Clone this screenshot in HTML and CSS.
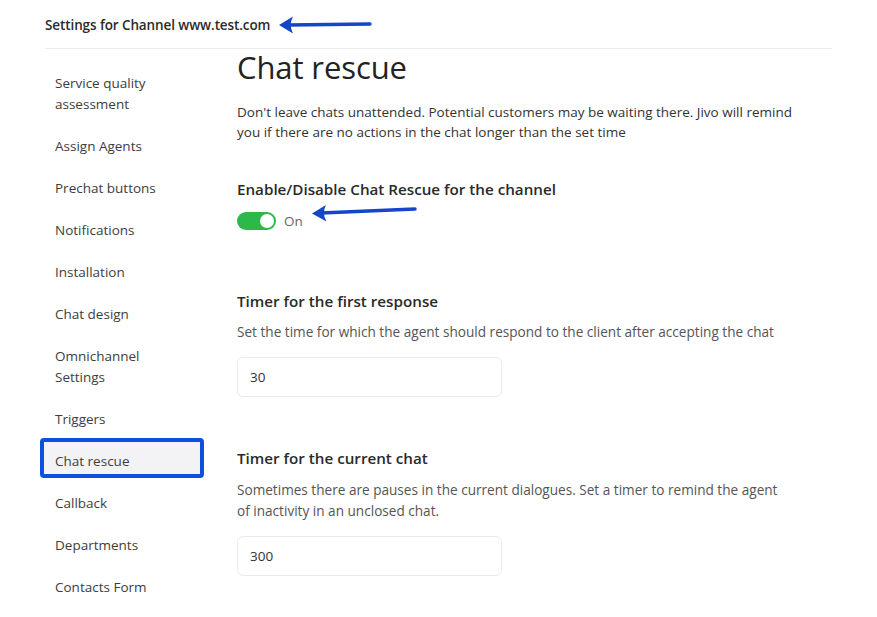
FILE: index.html
```html
<!DOCTYPE html>
<html lang="en">
<head>
<meta charset="utf-8">
<title>Chat rescue</title>
<link rel="stylesheet" href="styles.css">
</head>
<body>
<div class="frame">
  <header class="topbar">
    <span class="page-title">Settings for Channel www.test.com</span>
    <svg class="arrow arrow-top" width="96" height="20" viewBox="0 0 96 20" aria-hidden="true">
      <path d="M10 10 L92 9" stroke="#1546c9" stroke-width="3.5" stroke-linecap="round" fill="none"/>
      <path d="M1 10 L15 1.5 Q10.5 10 15 18.5 Z" fill="#1546c9"/>
    </svg>
  </header>
  <div class="layout">
    <nav class="sidebar">
      <a class="nav-item">Service quality assessment</a>
      <a class="nav-item">Assign Agents</a>
      <a class="nav-item">Prechat buttons</a>
      <a class="nav-item">Notifications</a>
      <a class="nav-item">Installation</a>
      <a class="nav-item">Chat design</a>
      <a class="nav-item">Omnichannel Settings</a>
      <a class="nav-item">Triggers</a>
      <a class="nav-item active">Chat rescue</a>
      <a class="nav-item">Callback</a>
      <a class="nav-item">Departments</a>
      <a class="nav-item">Contacts Form</a>
    </nav>
    <main class="content">
      <h1 class="title">Chat rescue</h1>
      <p class="intro">Don't leave chats unattended. Potential customers may be waiting there. Jivo will remind you if there are no actions in the chat longer than the set time</p>

      <section class="block block-toggle">
        <h2 class="label">Enable/Disable Chat Rescue for the channel</h2>
        <div class="toggle-row">
          <span class="switch"><span class="knob"></span></span>
          <span class="switch-text">On</span>
          <svg class="arrow arrow-toggle" width="108" height="20" viewBox="0 0 108 20" aria-hidden="true">
            <path d="M10 11 L104 7" stroke="#1546c9" stroke-width="3.5" stroke-linecap="round" fill="none"/>
            <path d="M1 11.5 L15 3 Q10.5 11.5 15.5 19.5 Z" fill="#1546c9"/>
          </svg>
        </div>
      </section>

      <section class="block block-first">
        <h2 class="label">Timer for the first response</h2>
        <p class="desc">Set the time for which the agent should respond to the client after accepting the chat</p>
        <div class="field">30</div>
      </section>

      <section class="block block-current">
        <h2 class="label">Timer for the current chat</h2>
        <p class="desc">Sometimes there are pauses in the current dialogues. Set a timer to remind the agent of inactivity in an unclosed chat.</p>
        <div class="field">300</div>
      </section>
    </main>
  </div>
</div>
</body>
</html>
```
FILE: styles.css
```css
* { box-sizing: border-box; }
html, body { margin: 0; padding: 0; background: #fff; }
body {
  font-family: "Open Sans", "Noto Sans", "Liberation Sans", sans-serif;
  color: #333;
  width: 877px;
  height: 617px;
  overflow: hidden;
}
.frame {
  margin-left: 45px;
  width: 787px;
}
.topbar {
  position: relative;
  height: 49px;
  border-bottom: 1px solid #ececec;
  display: flex;
  align-items: center;
  padding-top: 1px;
}
.page-title {
  font-size: 13.5px;
  font-weight: 600;
  color: #2b2b2b;
  letter-spacing: -0.1px;
}
.arrow { position: absolute; }
.arrow-top { left: 233px; top: 15px; }

.layout {
  display: flex;
  padding-top: 13px;
  margin-left: -1px;
}
.sidebar {
  width: 156px;
  display: flex;
  flex-direction: column;
}
.nav-item {
  display: block;
  font-size: 13.5px;
  line-height: 21px;
  padding: 10.5px 22px 10.5px 11px;
  color: #3d3d3d;
}
.nav-item.active {
  margin: -2px -4px 4px -4px;
  border: 4px solid #0d4fe0;
  border-radius: 4px;
  background: #f3f3f5;
  padding: 8.5px 11px 2.5px 11px;
  height: 40px;
}

.content {
  margin-left: 37px;
  flex: 1;
  position: relative;
}
.title {
  margin: -17px 0 0;
  font-size: 31px;
  font-weight: 500;
  line-height: 44px;
  color: #222;
  letter-spacing: -0.1px;
}
.intro {
  margin: 13px 0 0;
  font-size: 13.5px;
  line-height: 20px;
  width: 575px;
  color: #333;
}
.label {
  margin: 0;
  font-size: 15.2px;
  font-weight: 600;
  line-height: 22px;
  color: #2a2a2a;
}
.block-toggle { margin-top: 36px; }
.toggle-row {
  position: relative;
  display: flex;
  align-items: center;
  gap: 8px;
  margin-top: 11.5px;
}
.switch {
  width: 39px;
  height: 18px;
  border-radius: 9px;
  background: #2db84c;
  position: relative;
  display: inline-block;
}
.knob {
  position: absolute;
  right: 2px;
  top: 2px;
  width: 14px;
  height: 14px;
  border-radius: 50%;
  background: #fff;
}
.switch-text {
  font-size: 13.5px;
  color: #666;
  line-height: 18px;
}
.arrow-toggle { left: 74px; top: -10px; }

.block-first { margin-top: 60px; }
.block-current { margin-top: 50px; }
.desc {
  margin: 9px 0 0;
  font-size: 13.6px;
  line-height: 21px;
  color: #555;
  width: 550px;
}
.block-current .desc { margin-top: 10.5px; }
.field {
  margin-top: 15px;
  width: 265px;
  height: 40px;
  border: 1px solid #ebebeb;
  border-radius: 6px;
  padding: 0 12px;
  font-size: 13.5px;
  line-height: 38px;
  color: #333;
}
```
